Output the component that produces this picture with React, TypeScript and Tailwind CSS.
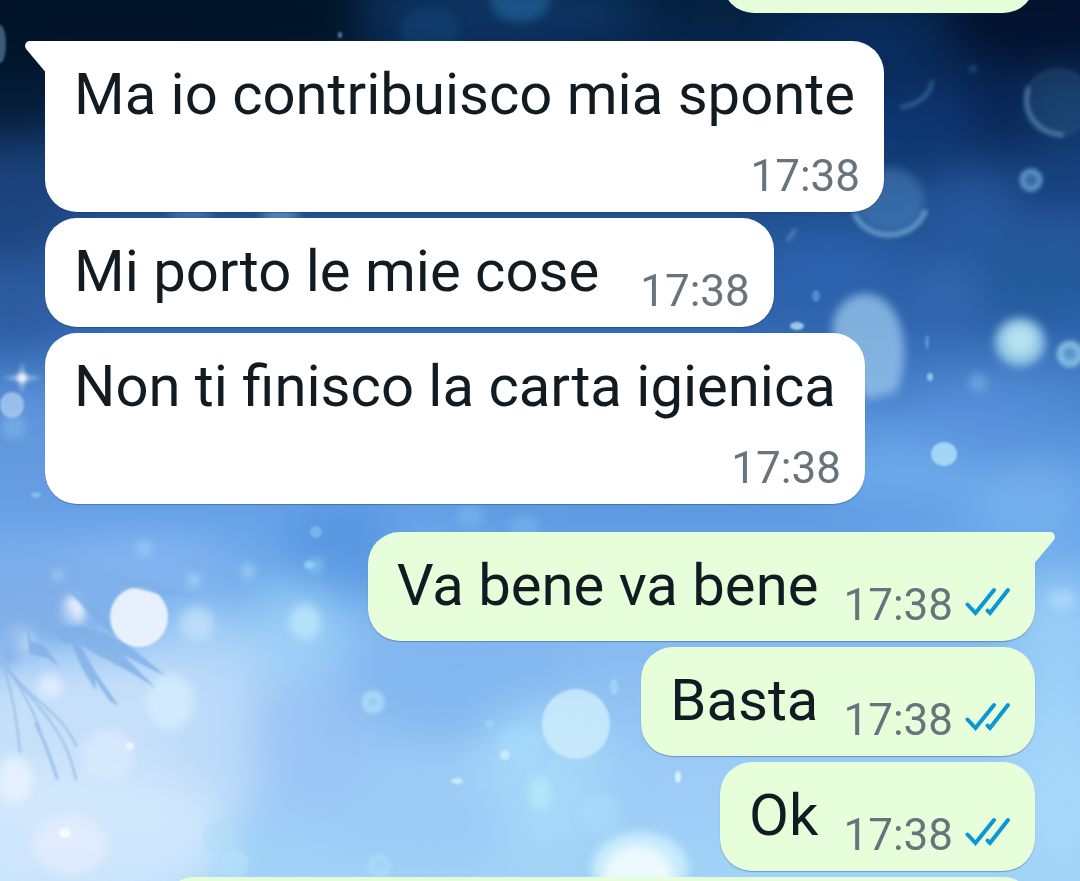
import React from "react";
import clsx from "clsx";

interface Message {
  text?: string;
  time?: string;
  outgoing?: boolean;
  tail?: boolean;
  stacked?: boolean;
  className?: string;
}

const messages: Message[] = [
  { outgoing: true, className: "w-[313px] h-[109px]" },
  {
    text: "Ma io contribuisco mia sponte",
    time: "17:38",
    tail: true,
    stacked: true,
    className: "mt-7",
  },
  { text: "Mi porto le mie cose", time: "17:38", className: "mt-1.5" },
  {
    text: "Non ti finisco la carta igienica",
    time: "17:38",
    stacked: true,
    className: "mt-1.5",
  },
  {
    text: "Va bene va bene",
    time: "17:38",
    outgoing: true,
    tail: true,
    className: "mt-7",
  },
  { text: "Basta", time: "17:38", outgoing: true, className: "mt-1.5" },
  { text: "Ok", time: "17:38", outgoing: true, className: "mt-1.5" },
  { outgoing: true, className: "mt-1.5 w-[873px] h-[109px]" },
];

// x, y, rx, ry, colour, opacity
type Blob = [number, number, number, number, string, number];

const haze: Blob[] = [
  [120, 20, 260, 60, "#00101f", 0.8],
  [500, 10, 150, 30, "#174a86", 0.5],
  [860, 40, 80, 30, "#0c3168", 0.7],
  [1040, 20, 90, 50, "#020f2a", 0.8],
  [1000, 110, 50, 40, "#06204f", 0.6],
  [1060, 100, 30, 30, "#163f6c", 0.7],
  [10, 100, 60, 40, "#04182f", 0.8],
  [10, 200, 60, 60, "#1c4078", 0.7],
  [920, 125, 60, 40, "#0e3674", 0.7],
  [1060, 190, 50, 30, "#123a78", 0.6],
  [1060, 230, 40, 20, "#3561a8", 0.6],
  [970, 215, 50, 40, "#2c5ea6", 0.6],
  [830, 270, 70, 40, "#2f66b6", 0.6],
  [950, 290, 30, 20, "#4070bb", 0.7],
  [1040, 280, 70, 50, "#205a98", 0.6],
  [1050, 400, 50, 30, "#3f7ec4", 0.6],
  [10, 310, 50, 40, "#2c5698", 0.6],
  [30, 450, 60, 70, "#6a9ce0", 0.5],
  [1000, 420, 80, 40, "#5a93dc", 0.6],
  [900, 480, 80, 40, "#74b2f0", 0.6],
  [1030, 500, 60, 40, "#7fb9f2", 0.6],
  [700, 515, 260, 20, "#5593dc", 0.7],
  [340, 550, 60, 50, "#4c8edc", 0.6],
  [30, 580, 90, 50, "#7faee9", 0.7],
  [150, 560, 80, 20, "#93bcf6", 0.7],
  [200, 660, 60, 50, "#b4d8fa", 0.7],
  [110, 700, 150, 50, "#c2dcf9", 0.8],
  [90, 760, 180, 90, "#cbe2fa", 0.8],
  [60, 840, 170, 80, "#d6eafc", 0.8],
  [240, 720, 70, 80, "#b7d8f9", 0.6],
  [460, 680, 110, 60, "#7fb3ee", 0.7],
  [310, 740, 60, 70, "#98c1f4", 0.7],
  [540, 780, 70, 80, "#a8dbfa", 0.7],
  [420, 820, 90, 50, "#9ac8f5", 0.6],
  [1060, 640, 50, 70, "#9fd4fa", 0.7],
  [1060, 780, 50, 90, "#a8dcfb", 0.7],
  [300, 630, 50, 50, "#a4dafa", 0.6],
];

const softOrbs: Blob[] = [
  [520, 0, 30, 22, "#2a73b0", 0.5],
  [430, 30, 30, 22, "#1b568c", 0.3],
  [1020, 342, 25, 24, "#a6d8ee", 0.85],
  [1020, 340, 14, 14, "#c4ecf5", 0.7],
  [978, 383, 9, 9, "#8ec4ee", 0.5],
  [14, 427, 12, 12, "#80b7ea", 0.6],
  [890, 200, 34, 32, "#5b95cc", 0.4],
  [197, 624, 17, 17, "#c8e4fb", 0.7],
  [170, 702, 24, 28, "#d9effd", 0.7],
  [73, 611, 12, 15, "#eef4fe", 1],
  [20, 637, 14, 14, "#cfe1fa", 0.7],
  [50, 686, 12, 12, "#e8f3fe", 0.7],
  [305, 622, 16, 18, "#c3ebfc", 0.7],
  [15, 780, 18, 24, "#eaf3fe", 0.8],
  [70, 845, 38, 30, "#e7ecfd", 0.7],
  [108, 755, 26, 26, "#e0ecfd", 0.6],
  [540, 793, 12, 18, "#b8f0fc", 0.6],
  [520, 745, 22, 20, "#a4dafa", 0.6],
  [315, 565, 8, 6, "#a7dcfb", 0.6],
  [144, 548, 8, 8, "#a7d4fc", 0.6],
  [248, 571, 6, 7, "#a9d8fb", 0.8],
  [58, 575, 5, 5, "#b9dcfd", 0.8],
  [194, 580, 6, 6, "#b6dcfd", 0.8],
  [640, 868, 48, 36, "#d3f2fd", 0.8],
  [638, 876, 34, 30, "#f0fbff", 0.9],
  [1062, 600, 14, 10, "#b6e0fb", 0.6],
  [600, 815, 20, 20, "#aadcfb", 0.6],
  [470, 516, 14, 12, "#7cb6ef", 0.6],
  [524, 526, 15, 10, "#7cb6ef", 0.6],
  [190, 214, 24, 4, "#5f9ad4", 0.7],
  [280, 215, 20, 4, "#8ab8e4", 0.8],
];

const crispOrbs: Blob[] = [
  [139, 617, 29, 30, "#ecf2fd", 0.95],
  [576, 724, 34, 35, "#cbebfc", 0.85],
  [12, 405, 12, 13, "#a9cbef", 0.8],
  [944, 454, 13, 12, "#a8dcf7", 0.9],
  [0, 44, 6, 19, "#4b6d8c", 0.8],
  [797, 326, 7, 4, "#b9dff5", 0.8],
  [816, 296, 4, 6, "#6fa8dd", 0.6],
  [930, 377, 3, 4, "#a2d6f5", 0.8],
  [927, 342, 2, 7, "#7fb9ea", 0.5],
  [340, 35, 2, 3, "#5b9bc4", 0.8],
  [505, 755, 5, 5, "#cdefff", 0.8],
  [457, 781, 6, 3, "#d3f1fe", 0.8],
  [490, 724, 5, 4, "#a4d4f8", 0.7],
  [678, 777, 3, 6, "#dff8ff", 0.9],
  [65, 833, 6, 5, "#f8fcff", 0.95],
  [130, 746, 4, 4, "#f0f8ff", 0.9],
  [614, 687, 4, 8, "#b0dcf8", 0.6],
  [220, 838, 17, 18, "#afdcfa", 0.4],
  [235, 864, 14, 14, "#b9e3fb", 0.5],
  [316, 532, 6, 6, "#8ec4f5", 0.6],
  [309, 565, 5, 4, "#8fdcf8", 0.7],
  [36, 495, 5, 3, "#8cc3ef", 0.8],
];

// x, y, r, stroke width, colour, opacity
const rings: [number, number, number, number, string, number][] = [
  [1031, 180, 9, 5, "#68a6d2", 0.85],
  [1070, 354, 10, 7, "#8cc6e4", 0.85],
  [1058, 103, 33, 2, "#3a6890", 0.5],
  [373, 702, 8, 7, "#b3e2fb", 0.75],
  [379, 866, 9, 6, "#aee2fb", 0.6],
  [973, 69, 3, 3, "#2c5f98", 0.5],
];

const BlobLayer: React.FC<{ blobs: Blob[] }> = ({ blobs }) => (
  <>
    {blobs.map(([x, y, rx, ry, fill, opacity], index) => (
      <ellipse
        key={index}
        cx={x}
        cy={y}
        rx={rx}
        ry={ry}
        fill={fill}
        opacity={opacity}
      />
    ))}
  </>
);

const Wallpaper: React.FC = () => (
  <svg
    className="absolute inset-0 h-full w-full"
    viewBox="0 0 1080 881"
    preserveAspectRatio="xMidYMid slice"
    aria-hidden="true"
  >
    <defs>
      <linearGradient id="sky" x1="0" y1="0" x2="0" y2="1">
        <stop offset="0" stopColor="#04203f" />
        <stop offset="0.1" stopColor="#0a2b5a" />
        <stop offset="0.24" stopColor="#204f8f" />
        <stop offset="0.37" stopColor="#3267b1" />
        <stop offset="0.48" stopColor="#5791da" />
        <stop offset="0.6" stopColor="#69a5e9" />
        <stop offset="0.72" stopColor="#85b9f0" />
        <stop offset="0.86" stopColor="#9acaf6" />
        <stop offset="1" stopColor="#a2d3f8" />
      </linearGradient>
      <g colorInterpolationFilters="sRGB">
        <filter id="haze" x="-20%" y="-20%" width="140%" height="140%">
          <feGaussianBlur stdDeviation="20" />
        </filter>
        <filter id="soft" x="-20%" y="-20%" width="140%" height="140%">
          <feGaussianBlur stdDeviation="5" />
        </filter>
        <filter id="rim" x="-20%" y="-20%" width="140%" height="140%">
          <feGaussianBlur stdDeviation="2" />
        </filter>
        <filter id="edge" x="-20%" y="-20%" width="140%" height="140%">
          <feGaussianBlur stdDeviation="1" />
        </filter>
      </g>
    </defs>
    <rect width="1080" height="881" fill="url(#sky)" />
    <g filter="url(#haze)">
      <BlobLayer blobs={haze} />
    </g>
    <g filter="url(#soft)">
      <BlobLayer blobs={softOrbs} />
      <path
        d="M832 332C832 300 862 284 884 300C906 318 910 360 896 392L866 400Z"
        fill="#92c2e8"
        opacity="0.8"
      />
      <path
        d="M0 590L60 590L84 632L60 642L24 632L16 664L0 670Z"
        fill="#80ade6"
        opacity="0.6"
      />
    </g>
    <g filter="url(#edge)">
      <BlobLayer blobs={crispOrbs} />
    </g>
    <g filter="url(#rim)">
      {rings.map(([x, y, r, width, stroke, opacity], index) => (
        <circle
          key={index}
          cx={x}
          cy={y}
          r={r}
          fill={stroke}
          fillOpacity="0.5"
          stroke={stroke}
          strokeWidth={width}
          opacity={opacity}
        />
      ))}
      {/* half lit bokeh rims */}
      <g fill="none" stroke="#82b8dc" strokeLinecap="round">
        <path d="M855 215C868 242 912 242 925 212" strokeWidth="5" opacity="0.7" />
        <path d="M902 107C918 105 930 95 932 82" strokeWidth="4" opacity="0.35" />
        <path d="M1028 88C1022 112 1036 132 1062 135" strokeWidth="4" opacity="0.5" />
        <path d="M788 240L795 230" strokeWidth="3" opacity="0.6" />
      </g>
      {/* star glint */}
      <path
        d="M22 362L25 375L42 378L25 381L22 394L19 381L2 378L19 375Z"
        fill="#c5dff7"
        opacity="0.6"
      />
      <circle cx="22" cy="378" r="5" fill="#f1f8ff" />
    </g>
    <g filter="url(#edge)">
      {/* fir twigs */}
      <g fill="#7fb0e6" opacity="0.8">
        <path d="M90 571C128 576 160 584 192 596C160 597 128 588 90 571Z" />
        <path d="M180 560L200 560L200 572Z" />
        <path d="M68 590L84 596L108 620L113 635L92 616Z" />
        <path d="M50 628C72 622 100 630 112 637L132 648L166 676L143 665L122 654L156 688L130 672L96 654L78 643L66 644Z" />
        <path d="M70 640L80 645L98 676L119 706L110 701L95 680L96 691L82 668Z" />
        <path d="M26 624L32 642L44 646L60 667L48 658L30 654Z" />
      </g>
      <g fill="none" stroke="#93bae8" strokeLinecap="round" opacity="0.8">
        <path d="M2 662C20 684 34 712 41 732" strokeWidth="2" />
        <path d="M36 724C44 740 50 756 57 778" strokeWidth="3" />
        <path d="M2 662C30 700 66 726 76 780" strokeWidth="2" />
        <path d="M8 668C30 700 62 712 76 746" strokeWidth="2" />
        <path d="M5 670C14 700 18 730 20 752" strokeWidth="2" />
      </g>
    </g>
  </svg>
);

const ReadTicks: React.FC = () => (
  <svg
    className="mb-[14px] ml-3 h-[30px] w-[46px] shrink-0"
    viewBox="0 0 46 30"
    fill="none"
    stroke="#0a97d6"
    strokeWidth="4"
    strokeLinecap="round"
    role="img"
    aria-label="Read"
  >
    <path d="M2.500 17.500L10.500 26L29 3" />
    <path d="M22.500 23.500L25 26L43 3" />
  </svg>
);

const Tail: React.FC<{ outgoing?: boolean }> = ({ outgoing }) => (
  <svg
    className={clsx(
      "absolute top-0 h-[31px] w-[21px]",
      outgoing ? "-right-5 -scale-x-100 text-[#e6ffda]" : "-left-5 text-white"
    )}
    viewBox="0 0 21 31"
    fill="currentColor"
    aria-hidden="true"
  >
    <path d="M21 0H5C0.500 0 -1.500 5 1.500 8.500L20 30.500H21Z" />
  </svg>
);

const Bubble: React.FC<{ message: Message }> = ({ message }) => {
  const { text, time, outgoing, tail, stacked, className } = message;

  return (
    <li
      className={clsx(
        "relative flex shrink-0 rounded-[32px] pt-[19px] pr-6 pb-[10px] pl-[29px] shadow-[0_1px_1px_rgba(20,50,90,0.35)]",
        outgoing ? "self-end bg-[#e6ffda]" : "self-start bg-white",
        stacked && "flex-col",
        tail && (outgoing ? "rounded-tr-none" : "rounded-tl-none"),
        className
      )}
    >
      {tail && <Tail outgoing={outgoing} />}
      {text && (
        <p className="mr-[5px] text-[58px] leading-[68px] whitespace-nowrap text-[#111b21]">
          {text}
        </p>
      )}
      {time && (
        <div
          className={clsx(
            "flex items-end self-end",
            stacked ? "mt-[22px]" : outgoing ? "mt-7 ml-5" : "mt-7 ml-9"
          )}
        >
          <time className="text-[44px] leading-[52px] text-[#67747b]">
            {time}
          </time>
          {outgoing && <ReadTicks />}
        </div>
      )}
    </li>
  );
};

const App: React.FC = () => {
  return (
    <main className="relative h-screen overflow-hidden bg-[#69a5e9] font-['Roboto',sans-serif]">
      <Wallpaper />
      {/* the list starts scrolled past the top of its first bubble */}
      <ul className="relative -mt-24 flex flex-col px-[45px]">
        {messages.map((message, index) => (
          <Bubble key={index} message={message} />
        ))}
      </ul>
    </main>
  );
};

export default App;
